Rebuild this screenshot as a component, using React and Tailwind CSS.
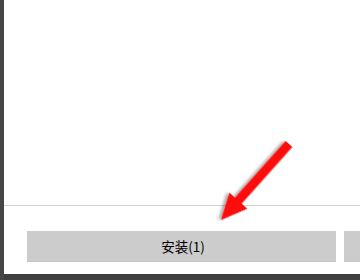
export default function App() {
  return (
    <div className="relative flex h-[280px] w-[360px] overflow-hidden bg-white" style={{ fontFamily: '"Microsoft YaHei", "Noto Sans CJK SC", "Noto Sans", sans-serif' }}>
      <div className="w-[4px] shrink-0 bg-[#464646]" />
      <div className="flex min-w-0 flex-1 flex-col">
        <div className="flex-1" />
        <div className="h-px bg-[#d0d0d0]" />
        <div className="flex h-[68px] shrink-0 gap-[8px] pl-[23px] pt-[25px]">
          <div className="flex h-[31px] w-[309px] shrink-0 items-center justify-center bg-[#cccccc] border-b border-[#c4c4c4] pl-[3px] text-[13.5px] text-black">
            安装(1)
          </div>
          <div className="h-[31px] w-[100px] shrink-0 bg-[#cccccc]" />
        </div>
        <div className="h-[6px] shrink-0 bg-[#3f3f3f]" />
      </div>
      <svg className="pointer-events-none absolute left-0 top-0" width="360" height="280">
        <defs>
          <filter id="sh" x="-20%" y="-20%" width="140%" height="140%">
            <feDropShadow dx="2" dy="2" stdDeviation="1.5" floodColor="#000" floodOpacity="0.35" />
          </filter>
        </defs>
        <g transform="translate(289,144) rotate(131.8)" filter="url(#sh)">
          <rect x="0" y="-4.5" width="80" height="9" fill="#ff0a0a" />
          <polygon points="76,-12 102,0 76,12" fill="#ff0a0a" />
        </g>
      </svg>
    </div>
  );
}
